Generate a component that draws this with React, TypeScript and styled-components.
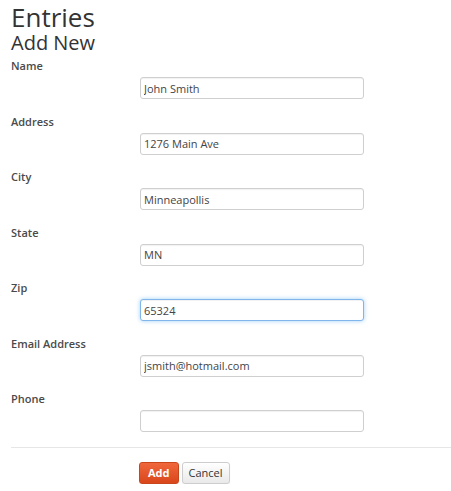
import styled, { createGlobalStyle } from "styled-components";

const GlobalStyle = createGlobalStyle`
  body {
    margin: 0;
    background: #fff;
    font-family: "Open Sans", "DejaVu Sans", sans-serif;
    color: #333;
  }
`;

const fields = [
  { label: "Name", value: "John Smith" },
  { label: "Address", value: "1276 Main Ave" },
  { label: "City", value: "Minneapollis" },
  { label: "State", value: "MN" },
  { label: "Zip", value: "65324", focused: true },
  { label: "Email Address", value: "jsmith@hotmail.com" },
  { label: "Phone", value: "" },
];

export default function App() {
  return (
    <>
      <GlobalStyle />
      <Page>
        <Title>Entries</Title>
        <SubTitle>Add New</SubTitle>
        <Form>
          {fields.map((f) => (
            <Field key={f.label}>
              <Label>{f.label}</Label>
              <Input type="text" defaultValue={f.value} $focused={f.focused} />
            </Field>
          ))}
          <Actions>
            <Button $primary>Add</Button>
            <Button>Cancel</Button>
          </Actions>
        </Form>
      </Page>
    </>
  );
}

const Page = styled.div`
  padding: 2px 0 0 11px;
`;

const Title = styled.h1`
  margin: 0;
  font-size: 26px;
  line-height: 30px;
  font-weight: 400;
  color: #333;
`;

const SubTitle = styled.h2`
  margin: 0;
  font-size: 20px;
  line-height: 22px;
  font-weight: 400;
  color: #333;
`;

const Form = styled.form`
  margin-top: 5px;
`;

const Field = styled.div`
  display: flex;
  flex-direction: column;
  margin-bottom: 15.5px;
`;

const Label = styled.label`
  font-size: 11px;
  line-height: 14px;
  font-weight: 600;
  color: #4a4a4a;
  margin-bottom: 4px;
`;

const Input = styled.input<{ $focused?: boolean }>`
  box-sizing: border-box;
  margin-left: 129px;
  width: 224px;
  height: 22px;
  padding: 0 3px;
  font-family: "Open Sans", "DejaVu Sans", sans-serif;
  font-size: 11px;
  color: #444;
  background: #fff;
  border: 1px solid ${(p) => (p.$focused ? "#80b6ec" : "#cfcfcf")};
  border-radius: 3px;
  box-shadow: ${(p) =>
    p.$focused
      ? "inset 0 1px 1px rgba(0,0,0,.06), 0 0 4px rgba(82,168,236,.55)"
      : "inset 0 1px 1px rgba(0,0,0,.06)"};
  outline: none;
`;

const Actions = styled.div`
  display: flex;
  gap: 3px;
  border-top: 1px solid #e6e6e6;
  margin-top: -1px;
  padding: 14px 0 0 128px;
`;

const Button = styled.button<{ $primary?: boolean }>`
  height: 22px;
  padding: 0 ${(p) => (p.$primary ? "8px" : "6px")};
  font-family: "Open Sans", "DejaVu Sans", sans-serif;
  font-size: 11px;
  font-weight: ${(p) => (p.$primary ? 700 : 400)};
  border-radius: 3px;
  cursor: pointer;
  color: ${(p) => (p.$primary ? "#fff" : "#333")};
  border: 1px solid ${(p) => (p.$primary ? "#c9461d" : "#cdcdcd")};
  background: ${(p) =>
    p.$primary
      ? "linear-gradient(#f0673c, #d9471b)"
      : "linear-gradient(#ffffff, #e9e9e9)"};
  box-shadow: 0 1px 1px rgba(0, 0, 0, 0.08);
`;
